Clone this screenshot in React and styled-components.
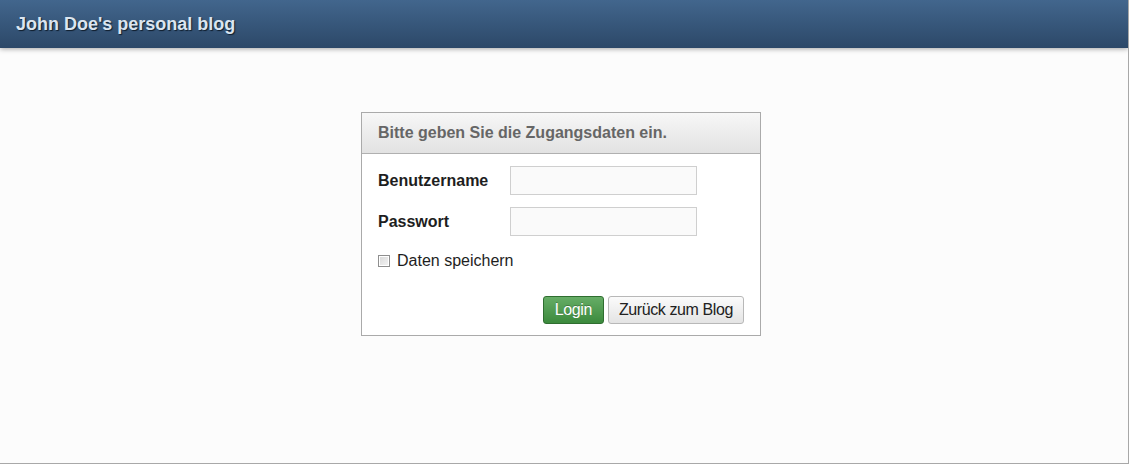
import React from 'react';
import styled, { createGlobalStyle } from 'styled-components';

const Global = createGlobalStyle`
  html, body {
    margin: 0;
    padding: 0;
    background: #fff;
    font-family: "Liberation Sans", Arial, sans-serif;
  }
`;

const Page = styled.div`
  width: 1128px;
  height: 463px;
  border-right: 1px solid #a8a8a8;
  border-bottom: 1px solid #a8a8a8;
  background: #fcfcfc;
  display: flex;
  flex-direction: column;
  overflow: hidden;
`;

const TopBar = styled.header`
  height: 48px;
  flex-shrink: 0;
  background: linear-gradient(to bottom, #42668d 0%, #2c4868 100%);
  box-shadow: 0 1px 5px rgba(0, 0, 0, 0.35);
  display: flex;
  align-items: center;
  padding-left: 16px;
  position: relative;
  z-index: 1;
`;

const Brand = styled.h1`
  margin: 0;
  font-size: 18px;
  font-weight: bold;
  color: #dbe5f0;
  text-shadow: 1px 1px 1px #0f1d2c;
  padding-top: 1px;
`;

const Main = styled.main`
  flex: 1;
  display: flex;
  justify-content: center;
  padding-top: 64px;
  padding-right: 6px;
`;

const Panel = styled.section`
  width: 398px;
  height: 222px;
  border: 1px solid #aaa;
  background: #fff;
  display: flex;
  flex-direction: column;
`;

const PanelHead = styled.div`
  height: 40px;
  border-bottom: 1px solid #b0b0b0;
  background: linear-gradient(to bottom, #f7f7f7 0%, #e2e2e2 100%);
  display: flex;
  align-items: center;
  padding-left: 16px;
  font-size: 16px;
  font-weight: bold;
  color: #666;
`;

const PanelBody = styled.form`
  padding: 12px 16px 0 16px;
  display: flex;
  flex-direction: column;
`;

const Field = styled.div`
  display: flex;
  align-items: center;
  height: 29px;
  margin-bottom: ${p => p.$gap || 12}px;
`;

const Label = styled.label`
  width: 132px;
  font-size: 16px;
  font-weight: bold;
  color: #1e1e1e;
`;

const Input = styled.input`
  width: 185px;
  height: 27px;
  box-sizing: content-box;
  padding: 0;
  border: 1px solid #cfcfcf;
  background: #fafafa;
  outline: none;
`;

const CheckRow = styled.label`
  display: flex;
  align-items: center;
  gap: 7px;
  font-size: 16px;
  color: #1e1e1e;
  margin-top: 9px;
  height: 20px;
`;

const Box = styled.span`
  width: 10px;
  height: 10px;
  border: 1px solid #8f8f8f;
  background: linear-gradient(135deg, #d8d8d8 0%, #f4f4f4 100%);
  box-shadow: inset 0 0 0 1px #fff;
`;

const Actions = styled.div`
  display: flex;
  justify-content: flex-end;
  gap: 4px;
  margin-top: 25px;
`;

const Button = styled.button`
  height: 28px;
  padding: 0 ${p => (p.$primary ? 11 : 10)}px;
  font-family: "Liberation Sans", Arial, sans-serif;
  font-size: 16px;
  letter-spacing: -0.4px;
  border-radius: 3px;
  cursor: pointer;
  border: 1px solid ${p => (p.$primary ? '#2f6e30' : '#b8b8b8')};
  color: ${p => (p.$primary ? '#fff' : '#222')};
  background: ${p =>
    p.$primary
      ? 'linear-gradient(to bottom, #66ad66 0%, #3c8a3d 100%)'
      : 'linear-gradient(to bottom, #fbfbfb 0%, #e4e4e4 100%)'};
  text-shadow: ${p => (p.$primary ? '0 -1px 0 rgba(0,0,0,0.25)' : 'none')};
`;

export default function App() {
  return (
    <>
      <Global />
      <Page>
        <TopBar>
          <Brand>John Doe's personal blog</Brand>
        </TopBar>
        <Main>
          <Panel>
            <PanelHead>Bitte geben Sie die Zugangsdaten ein.</PanelHead>
            <PanelBody onSubmit={e => e.preventDefault()}>
              <Field>
                <Label>Benutzername</Label>
                <Input type="text" />
              </Field>
              <Field $gap={6}>
                <Label>Passwort</Label>
                <Input type="password" />
              </Field>
              <CheckRow>
                <Box />
                Daten speichern
              </CheckRow>
              <Actions>
                <Button $primary type="submit">Login</Button>
                <Button type="button">Zurück zum Blog</Button>
              </Actions>
            </PanelBody>
          </Panel>
        </Main>
      </Page>
    </>
  );
}
